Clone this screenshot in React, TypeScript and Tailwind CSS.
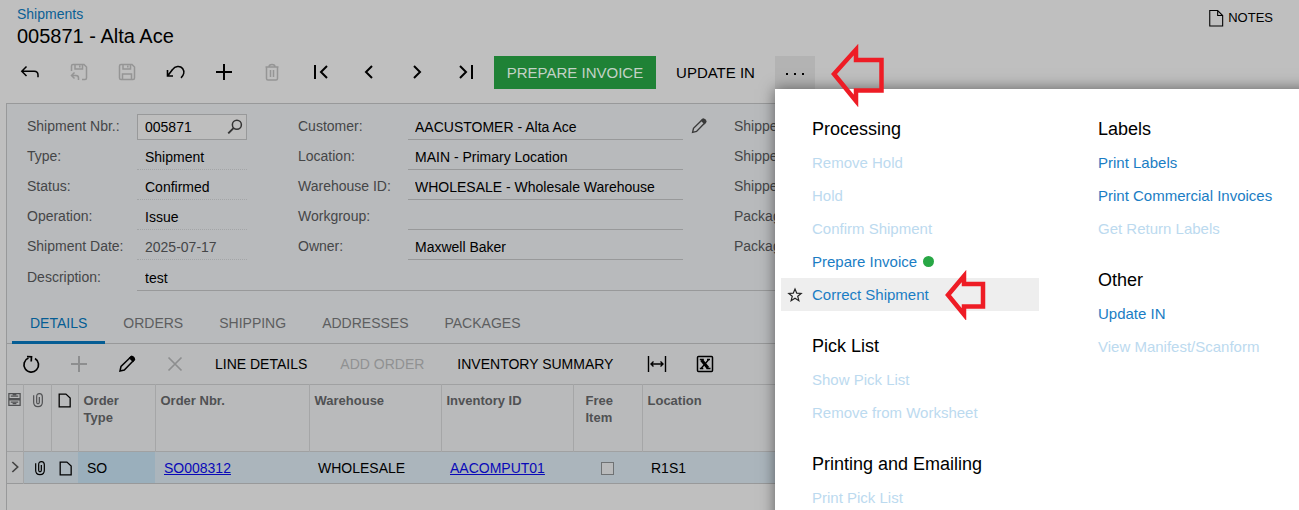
import React from 'react'

interface IconProps {
  children: React.ReactNode
  className?: string
  size?: number
}

const Icon: React.FC<IconProps> = ({ children, className = '', size = 24 }) => (
  <svg
    width={size}
    height={size}
    viewBox="0 0 24 24"
    fill="none"
    stroke="currentColor"
    strokeWidth={1.5}
    className={`shrink-0 ${className}`}
    aria-hidden="true"
  >
    {children}
  </svg>
)

const BackIcon = () => (
  <Icon>
    <path d="M8.5 6.5 3.8 11.2l4.7 4.8M4 11.2h12.2q3.8 0 3.8 3.8v2.2" />
  </Icon>
)

const SaveBackIcon = () => (
  <Icon>
    <path d="M4.5 11V6q0-1.5 1.5-1.5h11l2.5 2.500v11q0 1.500-1.500 1.500h-3M8 4.500V9h7.500V4.500M12.800 5.500v2" />
    <path d="M7.500 12.500 4.500 15.500l3 3M4.500 15.500h4.500q2.500 0 2.500 2.500v2" />
  </Icon>
)

const SaveIcon = () => (
  <Icon>
    <path d="M6 4.500h11l2.500 2.500v11q0 1.500-1.500 1.500H6Q4.500 19.500 4.500 18V6Q4.500 4.500 6 4.500z" />
    <path d="M8 4.500V9h7.500V4.500M12.800 5.500v2M7.500 19.500V14h9v5.500" />
  </Icon>
)

const UndoIcon = () => (
  <Icon>
    <path d="M4.500 10v6H10M4.800 15.700 9.500 9.600C12 6 17.200 5.400 19.600 8.600c2.200 3 1.200 6.700-1.600 9.200" strokeWidth={1.600} />
  </Icon>
)

const PlusIcon = () => (
  <Icon>
    <path d="M12 4v16M4 12h16" strokeWidth={2} />
  </Icon>
)

const TrashIcon = () => (
  <Icon>
    <path d="M5.500 7h13M9 7q0-2.500 3-2.500T15 7M6.500 7v11.500q0 1.500 1.500 1.500h8q1.500 0 1.500-1.500V7M10.500 10v7M13.500 10v7" />
  </Icon>
)

const FirstIcon = () => (
  <Icon>
    <path d="M6 5v14M18 6l-6 6 6 6" strokeWidth={2} />
  </Icon>
)

const PrevIcon = () => (
  <Icon>
    <path d="M15 6l-6 6 6 6" strokeWidth={2} />
  </Icon>
)

const NextIcon = () => (
  <Icon>
    <path d="M9 6l6 6-6 6" strokeWidth={2} />
  </Icon>
)

const LastIcon = () => (
  <Icon>
    <path d="M6 6l6 6-6 6M18 5v14" strokeWidth={2} />
  </Icon>
)

const PencilIcon = ({ className = '' }: { className?: string }) => (
  <Icon className={className}>
    <path d="M5 19l1-4.500L15.500 5.300q1.500-1.300 3 0t0 3.200L9.300 18z" />
    <path d="M14.800 6 18 9.200l1.400-1.700-3-2.900z" fill="currentColor" />
  </Icon>
)

const FileIcon = () => (
  <Icon size={17}>
    <path d="M4.500 3h9.500L20 8.500V21H4.500z" strokeWidth={1.800} />
  </Icon>
)

const ClipIcon = ({ className = '' }: { className?: string }) => (
  <Icon size={16} className={className}>
    <path d="M5.500 5v10.500q0 6.500 6.500 6.500t6.500-6.500V7q0-4.500-4.300-4.500T10 7v8.500q0 2.200 2 2.200t2-2.200V7.500" strokeWidth={1.800} />
  </Icon>
)

const toolbarIcons = [
  { label: 'Back', icon: <BackIcon /> },
  { label: 'Save and close', icon: <SaveBackIcon />, disabled: true },
  { label: 'Save', icon: <SaveIcon />, disabled: true },
  { label: 'Undo', icon: <UndoIcon /> },
  { label: 'Add', icon: <PlusIcon /> },
  { label: 'Delete', icon: <TrashIcon />, disabled: true },
  { label: 'First', icon: <FirstIcon /> },
  { label: 'Previous', icon: <PrevIcon /> },
  { label: 'Next', icon: <NextIcon /> },
  { label: 'Last', icon: <LastIcon /> }
]

interface MenuEntry {
  title: string
  disabled?: boolean
  recommended?: boolean
  active?: boolean
}

interface MenuSection {
  title: string
  items: MenuEntry[]
}

const menuColumns: MenuSection[][] = [
  [
    {
      title: 'Processing',
      items: [
        { title: 'Remove Hold', disabled: true },
        { title: 'Hold', disabled: true },
        { title: 'Confirm Shipment', disabled: true },
        { title: 'Prepare Invoice', recommended: true },
        { title: 'Correct Shipment', active: true }
      ]
    },
    {
      title: 'Pick List',
      items: [
        { title: 'Show Pick List', disabled: true },
        { title: 'Remove from Worksheet', disabled: true }
      ]
    },
    {
      title: 'Printing and Emailing',
      items: [{ title: 'Print Pick List', disabled: true }]
    }
  ],
  [
    {
      title: 'Labels',
      items: [
        { title: 'Print Labels' },
        { title: 'Print Commercial Invoices' },
        { title: 'Get Return Labels', disabled: true }
      ]
    },
    {
      title: 'Other',
      items: [{ title: 'Update IN' }, { title: 'View Manifest/Scanform', disabled: true }]
    }
  ]
]

const MenuItem: React.FC<{ item: MenuEntry }> = ({ item }) => (
  <li className={`relative flex h-[33px] items-center ${item.active ? 'bg-[#eeeeee]' : ''}`}>
    <span className="flex w-[31px] shrink-0 pl-1.5 text-[#222]">
      {item.active && (
        <Icon size={16}>
          <path d="M12 3l2.600 6.200 6.700.500-5.200 4.300 1.700 6.500-5.800-3.600-5.800 3.600 1.700-6.500L2.700 9.700l6.700-.5z" strokeWidth={1.800} />
        </Icon>
      )}
    </span>
    <button
      type="button"
      disabled={item.disabled}
      className={`text-[15px] leading-5 whitespace-nowrap ${item.disabled ? 'text-[#bcdaef]' : 'text-[#1a7dc4]'}`}
    >
      {item.title}
    </button>
    {item.recommended && <span className="ml-1.5 size-[11px] rounded-full bg-[#28a745]" />}
    {item.active && (
      <svg width="42" height="50" viewBox="0 0 42 50" className="absolute -top-2 left-[164px]">
        <path d="M3 25 19 6v8h19v22.500H19v8z" fill="none" stroke="#ee1c25" strokeWidth={4.500} />
      </svg>
    )}
  </li>
)

const ActionsMenu = () => (
  <div className="absolute top-full left-0 z-10 flex gap-7 bg-white pt-6 pr-6 pb-10 pl-1.5 shadow-[0_0_14px_rgba(0,0,0,0.5)]">
    {menuColumns.map((sections, index) => (
      <div key={index} className="flex w-[258px] flex-col gap-[19px]">
        {sections.map((section) => (
          <section key={section.title}>
            <h2 className="pl-[31px] text-lg leading-[33px] text-black">{section.title}</h2>
            <ul>
              {section.items.map((item) => (
                <MenuItem key={item.title} item={item} />
              ))}
            </ul>
          </section>
        ))}
      </div>
    ))}
  </div>
)

const Toolbar = () => (
  <div className="mt-2 flex h-[33px] items-stretch pl-1.5 text-[15px] text-black">
    <div className="grid w-[484px] shrink-0 grid-cols-10 pb-px">
      {toolbarIcons.map(({ label, icon, disabled }) => (
        <button
          key={label}
          type="button"
          aria-label={label}
          disabled={disabled}
          className={`flex items-center justify-center ${disabled ? 'text-[#959595]' : 'text-black'}`}
        >
          {icon}
        </button>
      ))}
    </div>
    <button type="button" className="ml-1 w-[162px] shrink-0 bg-[#1f8236] pt-px whitespace-nowrap text-[#c3d2c6]">
      PREPARE INVOICE
    </button>
    <button type="button" className="w-[119px] shrink-0 pt-px whitespace-nowrap">
      UPDATE IN
    </button>
    <div className="relative flex">
      <button type="button" aria-label="More actions" className="flex w-10 items-center justify-center bg-[#b3b3b3]">
        <Icon>
          <path d="M3 13h2M11 13h2M19 13h2" strokeWidth={2} />
        </Icon>
      </button>
      <ActionsMenu />
      <svg width="56" height="64" viewBox="0 0 56 64" className="absolute -top-[13px] left-[55px] z-20">
        <path d="M4 31 26 6.500V17h25.500v30.500H26V58z" fill="none" stroke="#ee1c25" strokeWidth={4.500} />
      </svg>
    </div>
  </div>
)

interface FieldProps {
  id: string
  label: string
  value: string
  className?: string
}

const Field: React.FC<FieldProps> = ({ id, label, value, className = '' }) => (
  <div className="flex h-[26px]">
    <label htmlFor={id} className="w-[110px] shrink-0 leading-6 text-[#454648]">
      {label}
    </label>
    <input id={id} readOnly value={value} className={`min-w-0 flex-1 border-b outline-none ${className}`} />
  </div>
)

const SummaryForm = () => (
  <form className="bg-[#b8babc] pt-2.5 pb-[9px] pl-5 text-sm">
    <div className="flex">
      <div className="flex w-[220px] shrink-0 flex-col gap-1">
        <div className="flex h-[26px]">
          <label htmlFor="nbr" className="w-[110px] shrink-0 leading-6 text-[#454648]">
            Shipment Nbr.:
          </label>
          <div className="flex min-w-0 flex-1 items-center border border-[#98999a] bg-[#bebebe] pr-0.5">
            <input id="nbr" readOnly value="005871" className="min-w-0 flex-1 pl-[7px] text-black outline-none" />
            <button type="button" aria-label="Look up shipment" className="text-[#333]">
              <Icon size={18}>
                <circle cx="14.500" cy="9" r="6" strokeWidth={2} />
                <path d="M10 13.500 3 20.500" strokeWidth={2.500} />
              </Icon>
            </button>
          </div>
        </div>
        <Field id="type" label="Type:" value="Shipment" className="border-dotted border-[#a3a5a7] pl-2 text-black" />
        <Field id="status" label="Status:" value="Confirmed" className="border-dotted border-[#a3a5a7] pl-2 text-black" />
        <Field id="operation" label="Operation:" value="Issue" className="border-dotted border-[#a3a5a7] pl-2 text-black" />
        <Field id="date" label="Shipment Date:" value="2025-07-17" className="border-dotted border-[#a3a5a7] pl-2 text-[#454648]" />
      </div>
      <div className="ml-[51px] flex w-[385px] shrink-0 flex-col gap-1">
        <Field id="customer" label="Customer:" value="AACUSTOMER - Alta Ace" className="border-[#98999a] pl-[7px] text-black" />
        <Field id="location" label="Location:" value="MAIN - Primary Location" className="border-[#98999a] pl-[7px] text-black" />
        <Field id="warehouse" label="Warehouse ID:" value="WHOLESALE - Wholesale Warehouse" className="border-[#98999a] pl-[7px] text-black" />
        <Field id="workgroup" label="Workgroup:" value="" className="border-[#98999a] pl-[7px] text-black" />
        <Field id="owner" label="Owner:" value="Maxwell Baker" className="border-[#98999a] pl-[7px] text-black" />
      </div>
      <button type="button" aria-label="Edit customer" className="ml-1 flex size-6 shrink-0 items-center justify-center text-[#3a3a3a]">
        <PencilIcon className="size-[22px]" />
      </button>
      <div className="ml-[23px] flex min-w-0 flex-1 flex-col gap-1">
        <Field id="shippedQty" label="Shipped Qty.:" value="" className="border-[#98999a]" />
        <Field id="shippedWeight" label="Shipped Wt.:" value="" className="border-[#98999a]" />
        <Field id="shippedVolume" label="Shipped Vol.:" value="" className="border-[#98999a]" />
        <Field id="packages" label="Packages:" value="" className="border-[#98999a]" />
        <Field id="packageWeight" label="Package Wt.:" value="" className="border-[#98999a]" />
      </div>
    </div>
    <div className="mt-[5px]">
      <Field id="description" label="Description:" value="test" className="border-[#98999a] pl-2 text-black" />
    </div>
  </form>
)

const tabs = ['DETAILS', 'ORDERS', 'SHIPPING', 'ADDRESSES', 'PACKAGES']

const Tabs = () => (
  <nav className="flex h-11 items-stretch border-b border-[#98999a] bg-[#b8babc] pl-[5px] text-sm">
    {tabs.map((tab, index) => (
      <button
        key={tab}
        type="button"
        className={`-mb-px border-b-3 px-[18px] pt-[5px] ${
          index === 0 ? 'border-[#055d94] text-[#055d94]' : 'border-transparent text-[#5d5e60]'
        }`}
      >
        {tab}
      </button>
    ))}
  </nav>
)

const GridToolbar = () => (
  <div className="flex h-10 items-center bg-[#b9babb] text-sm text-black">
    <button type="button" aria-label="Refresh" className="flex w-12 justify-center">
      <Icon>
        <path d="M9.500 6A7.300 7.300 0 1 0 16 6.500M8 4.500l4.500.3-.3 4.700" strokeWidth={1.700} />
      </Icon>
    </button>
    <button type="button" aria-label="Add row" disabled className="flex w-12 justify-center text-[#8d8e8f]">
      <PlusIcon />
    </button>
    <button type="button" aria-label="Edit row" className="flex w-12 justify-center">
      <PencilIcon />
    </button>
    <button type="button" aria-label="Delete row" disabled className="flex w-12 justify-center text-[#8d8e8f]">
      <Icon>
        <path d="M5.500 5.500l13 13M18.500 5.500l-13 13" strokeWidth={1.700} />
      </Icon>
    </button>
    <div className="flex gap-px pr-1">
      <button type="button" className="px-4 whitespace-nowrap">
        LINE DETAILS
      </button>
      <button type="button" disabled className="px-4 whitespace-nowrap text-[#909192]">
        ADD ORDER
      </button>
      <button type="button" className="px-4 whitespace-nowrap">
        INVENTORY SUMMARY
      </button>
    </div>
    <button type="button" aria-label="Fit columns" className="flex w-12 justify-center">
      <Icon>
        <path d="M3.500 4v16M20.500 4v16M6 12h12M8.500 9.500 6 12l2.500 2.500M15.500 9.500 18 12l-2.500 2.500" strokeWidth={1.400} />
      </Icon>
    </button>
    <button type="button" aria-label="Export to Excel" className="flex w-12 justify-center">
      <Icon>
        <rect x="4.500" y="4.500" width="15" height="15" rx="1" />
        <path d="M8.500 8l6.500 8" strokeWidth={3} />
        <path d="M15.800 7.500 8 16.500M6.800 7.500h4M14 7.500h3M6.800 16.500h3.500M13.500 16.500h4" strokeWidth={1.300} />
      </Icon>
    </button>
  </div>
)

const DetailsTable = () => (
  <table className="w-full table-fixed border-collapse text-left text-sm text-black">
    <colgroup>
      <col className="w-4" />
      <col className="w-7" />
      <col className="w-[27px]" />
      <col className="w-[77px]" />
      <col className="w-[154px]" />
      <col className="w-[132px]" />
      <col className="w-[132px]" />
      <col className="w-[69px]" />
      <col />
    </colgroup>
    <thead>
      <tr className="h-[67px] border-y border-[#a0a1a2] bg-[#b9babb] align-top text-[13px] leading-[17px] text-[#505153] [&>th]:border-r [&>th]:border-[#a5a6a7] [&>th]:pt-[7px]">
        <th aria-label="Row settings">
          <Icon size={15}>
            <path d="M3 2.500h18v8H3zM3 12.500h18v9H3zM6 6.500h12M6 16h12" strokeWidth={2} />
            <path d="M9 4.500h6M9 18.500h6" strokeWidth={2.500} />
          </Icon>
        </th>
        <th aria-label="Attachments">
          <ClipIcon className="ml-1.5" />
        </th>
        <th aria-label="Notes" className="pl-1 text-black">
          <FileIcon />
        </th>
        <th className="pr-5 pl-[5px]">Order Type</th>
        <th className="pl-[5px]">Order Nbr.</th>
        <th className="pl-[5px]">Warehouse</th>
        <th className="pl-[5px]">Inventory ID</th>
        <th className="pr-5 pl-3">Free Item</th>
        <th className="pl-[5px]">Location</th>
      </tr>
    </thead>
    <tbody>
      <tr className="h-8 border-b border-[#98999a] bg-[#abb5bc] [&>td]:pt-px">
        <td className="border-r border-[#a5a6a7] bg-[#b9babb] text-[#444]">
          <Icon size={16}>
            <path d="M8 3l8 7.500L8 18" strokeWidth={2.500} />
          </Icon>
        </td>
        <td>
          <ClipIcon className="ml-2" />
        </td>
        <td className="pl-1.5">
          <FileIcon />
        </td>
        <td className="bg-[#9aafbc] pl-[9px]">SO</td>
        <td className="pl-[9px]">
          <a href="#order" className="text-[#0909b8] underline">
            SO008312
          </a>
        </td>
        <td className="pl-[9px]">WHOLESALE</td>
        <td className="pl-[9px]">
          <a href="#item" className="text-[#0909b8] underline">
            AACOMPUT01
          </a>
        </td>
        <td>
          <input
            type="checkbox"
            aria-label="Free item"
            className="mx-auto block size-[13px] appearance-none border border-[#6f7274] bg-[#b9babb]"
          />
        </td>
        <td className="pl-[9px]">R1S1</td>
      </tr>
    </tbody>
  </table>
)

export default function App() {
  return (
    <div className="flex h-screen flex-col overflow-hidden bg-[#bfbfbf] font-['Liberation_Sans',Arial,sans-serif]">
      <header className="flex items-start justify-between pt-1 pr-[26px] pl-[17px]">
        <div>
          <a href="#shipments" className="block text-sm text-[#0b6095]">
            Shipments
          </a>
          <h1 className="text-xl leading-6 text-black">005871 - Alta Ace</h1>
        </div>
        <button type="button" className="mt-1 flex items-center gap-0.5 text-[13px] leading-5 text-black">
          <Icon size={20}>
            <path d="M4.500 3h9.500l6 6v12.500H4.500zM14 3v6h6" strokeWidth={1.300} />
          </Icon>
          NOTES
        </button>
      </header>
      <Toolbar />
      <main className="mt-3.5 ml-1.5 flex-1 border-t border-l border-[#98999a]">
        <SummaryForm />
        <Tabs />
        <GridToolbar />
        <DetailsTable />
      </main>
    </div>
  )
}
